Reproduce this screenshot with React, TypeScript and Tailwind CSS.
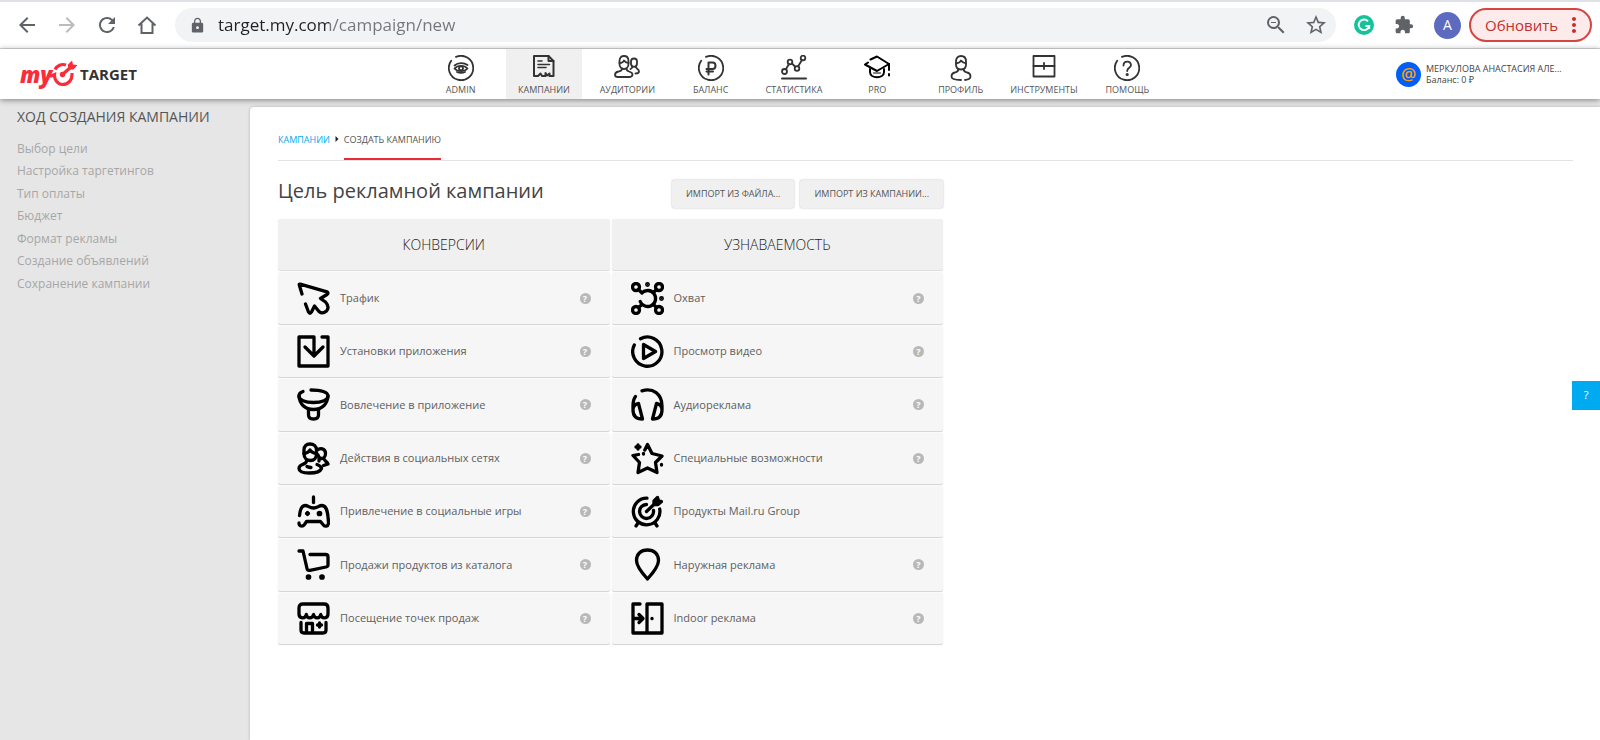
import { ReactNode } from "react";
import {
  MdArrowBack,
  MdArrowForward,
  MdExtension,
  MdLock,
  MdMoreVert,
  MdRefresh,
  MdStarBorder,
  MdZoomOut,
} from "react-icons/md";

type NavItem = { label: string; icon: ReactNode; active?: boolean };
type Goal = { label: string; icon: ReactNode; noHelp?: boolean };

const ring = <path d="M8 1.9A12.2 12.2 0 1 1 3.2 5.8" />;

const navItems: NavItem[] = [
  {
    label: "ADMIN",
    icon: (
      <>
        {ring}
        <path d="M6.5 10.5C10 7.5 16 7.5 19.5 10" />
        <path d="M6.5 13.5C9.5 10 16.5 10 19.5 13.5C16.5 17 9.5 17 6.5 13.5Z" />
        <circle cx="13" cy="13.3" r="2" />
        <path d="M9 17C11.5 18.2 14.5 18.2 17 17" />
      </>
    ),
  },
  {
    label: "КАМПАНИИ",
    active: true,
    icon: (
      <g strokeWidth="2">
        <path d="M3 21V1H17.5L22.5 6V21H18.5V18.5L16 20.5L14.5 18V21H11L9.5 18.5L7 21H3" />
        <path d="M17.5 1V6H22.5" />
        <path d="M7 6H11M7 9.5H18.5M7 12.5H15" strokeWidth="1.6" />
      </g>
    ),
  },
  {
    label: "АУДИТОРИИ",
    icon: (
      <>
        <path d="M5.5 6C5.5 2.5 7.5 1 10 1S14.5 2.5 14.5 6V9C14.5 12 12.5 14 10 14S5.5 12 5.5 9Z" />
        <path d="M5.5 8C8 8 9.5 7 10 5.5C11 7 12.5 8 14.5 8" />
        <path d="M8 13.5C8 16 6.5 16 4.5 16.5C2 17 1 18.5 1 20C1 21.5 2 22 4 22H15C18 22 18.5 21 18.5 19.5C18.5 17.5 17 17 15 16.5C13 16 12.5 15.5 12.5 13.5" />
        <path d="M17 6.5C17 4.5 18.2 3.5 20 3.5S23 4.5 23 6.5V8.5C23 10.5 22 11.8 20 11.8S17 10.5 17 8.5Z" />
        <path d="M21.5 11.5C21.5 13.5 25 13.5 25 16.5C25 18 24 18.5 21.5 18.5M18.5 11.5C18.5 13 17.5 13.5 16.5 14" />
      </>
    ),
  },
  {
    label: "БАЛАНС",
    icon: (
      <>
        {ring}
        <path d="M10.5 19.5V7.5H14.5C18.5 7.5 18.5 14 14.5 14H8.5M8.5 16.5H15" strokeWidth="2" />
      </>
    ),
  },
  {
    label: "СТАТИСТИКА",
    icon: (
      <>
        <circle cx="3.5" cy="16.5" r="2.5" />
        <circle cx="9" cy="7" r="2.3" />
        <circle cx="16" cy="13.5" r="2.3" />
        <circle cx="22" cy="3" r="2.3" />
        <path d="M5 14L8 9M11 8.5L14.5 12M17 11.5L21 5" />
        <path d="M1 23.5H25" strokeWidth="2" />
      </>
    ),
  },
  {
    label: "PRO",
    icon: (
      <g stroke="#000" strokeWidth="2">
        <path d="M6.5 4.5L13 1.5L25 9L13 16L1 9.5L4 7.5" />
        <path d="M6 14V17C6 24 20 24 20 17V14" />
        <path d="M9.5 18H16.5" strokeWidth="1" />
        <path d="M25 9V15M25 19V20.5" />
      </g>
    ),
  },
  {
    label: "ПРОФИЛЬ",
    icon: (
      <>
        <path d="M8 6.5C8 3 10 1 13 1S18 3 18 6.5V9.5C18 12.5 16 14.5 13 14.5S8 12.5 8 9.5Z" />
        <path d="M8 8.5C10.5 8 12.5 7 13 5.5C14 7 16 8 18 8.5" />
        <path d="M10.5 14C10.5 16.5 9 17 7 17.5C4.5 18 3.5 19.5 3.5 21.5C3.5 24 6 25 13 25M17 25C21 24.5 22.5 23.5 22.5 21.5C22.5 19.5 21.5 18 19 17.5C17 17 15.5 16.5 15.5 14" />
      </>
    ),
  },
  {
    label: "ИНСТРУМЕНТЫ",
    icon: (
      <>
        <rect x="2.5" y="1" width="21" height="20.5" />
        <path d="M2.5 11H23.5M13 8V14" />
      </>
    ),
  },
  {
    label: "ПОМОЩЬ",
    icon: (
      <>
        {ring}
        <path d="M9.5 10.5C9.5 5.5 17 5.5 17 10C17 13 13.2 12.5 13.2 16" />
        <circle cx="13.2" cy="19.5" r="0.7" fill="#333" />
      </>
    ),
  },
];

const steps = [
  "Выбор цели",
  "Настройка таргетингов",
  "Тип оплаты",
  "Бюджет",
  "Формат рекламы",
  "Создание объявлений",
  "Сохранение кампании",
];

const conversions: Goal[] = [
  {
    label: "Трафик",
    icon: (
      <path d="M5 12L2.3 3Q2 1.8 3.2 2.1L30 9.8Q32 10.8 30 12.5L23.5 16.5L28.5 20Q33 25 29.5 29Q25.5 32.5 22 29.5L17.5 24L14.5 30Q13 32.5 11.5 30L8.5 22" />
    ),
  },
  {
    label: "Установки приложения",
    icon: <path d="M17 20.5V2H2V31H31V2H25M8 12L17 21L26 12" />,
  },
  {
    label: "Вовлечение в приложение",
    icon: (
      <>
        <path d="M6 3.5C3 4.5 2 6 2 8C2 12 8 14.5 16.5 14.5S31 12 31 8C31 4 24 2 14 2" />
        <path d="M2 8C2.5 16 8 21.5 16.5 21.5S30.5 16 31 8" />
        <path d="M11.5 22V27Q11.5 31 16.5 31T21.5 27V22" />
      </>
    ),
  },
  {
    label: "Действия в социальных сетях",
    icon: (
      <>
        <path d="M7 8C7 4 9.5 2 13 2S19.5 4 19.5 8V12C19.5 16 17 18.5 13.5 18.5S7 16 7 12Z" />
        <path d="M7 11.5C10 11 12 10 13 8C14 10 16.5 11 19.5 11.5" />
        <path d="M9.5 19C9.5 21 8 21.5 5.5 22.5C3 23.5 2 25 2 26.5C2 29.5 6.5 31 12.5 31S23 30 24.5 26.5C24.5 24.5 22.5 23.5 20 22.5" />
        <path d="M10 24.5C12 25.5 13 25.5 14 25.5" />
        <path d="M21 7.5C25 5.5 28.5 7.5 28.5 11.5C28.5 14.5 26.5 16.5 24.5 16.5S21.5 15 21 13M27 17C28 19 30 20 31 22L26.5 23.5M22 16V19" />
      </>
    ),
  },
  {
    label: "Привлечение в социальные игры",
    icon: (
      <>
        <path d="M16.5 2V7.5" />
        <path d="M2.5 20.5C3 16 4 10.5 8 10.5C11.5 10.5 12 13 16.5 13S21.5 10.5 25 10.5C30 10.5 31 18 31.5 27.5C31.5 32 27.5 32 26 29.5L23.5 26.5H9.5L7.5 29.5C5.5 32 2 31.5 2 28" />
        <path d="M10.5 17.5V19.5M9.5 18.5H11.5" />
        <circle cx="22.5" cy="18.5" r="1.2" fill="#000" />
      </>
    ),
  },
  {
    label: "Продажи продуктов из каталога",
    icon: (
      <>
        <path d="M2 3H6L10 20.5Q10.5 22.8 13 22.3L29 19Q31 18.5 31 17V9Q31 6.5 28.5 6.5H13" />
        <circle cx="11.5" cy="29" r="1.2" fill="#000" />
        <circle cx="25" cy="29" r="1.2" fill="#000" />
      </>
    ),
  },
  {
    label: "Посещение точек продаж",
    icon: (
      <>
        <path d="M2 12V6Q2 2 6 2H27Q31 2 31 6V12C31 17 24.5 17 23.7 12.5C23 17 17.5 17 16.5 12.5C15.5 17 10 17 9.3 12.5C8.5 17 2 17 2 12Z" />
        <path d="M4 20.5V28Q4 31 7 31H26Q29 31 29 28V20.5M9.5 30V21.5H15.5V30M22.5 21V25M20.5 23H24.5" />
      </>
    ),
  },
];

const awareness: Goal[] = [
  {
    label: "Охват",
    icon: (
      <>
        <circle cx="5" cy="5" r="3.5" />
        <circle cx="28" cy="5" r="3.5" />
        <circle cx="5" cy="28" r="3.5" />
        <circle cx="28" cy="28" r="3.5" />
        <path d="M11 10.8A8 8 0 1 1 9.2 19.5M7.5 7.5L11 11M25.5 7.5L22.5 10.5M25.5 25.5L22.5 22.5M7.5 25.5L11 22.5" />
        <circle cx="16.5" cy="2.5" r="0.8" fill="#000" />
        <circle cx="30.5" cy="16.5" r="0.8" fill="#000" />
      </>
    ),
  },
  {
    label: "Просмотр видео",
    icon: <path d="M9.5 3.7A14.6 14.6 0 1 1 3.3 10M12.5 9.5V23.5L24.5 16.5Z" />,
  },
  {
    label: "Аудиореклама",
    icon: (
      <>
        <path d="M11 2.8C22 -0.5 31 6 31 18V22C31 28 28 31 21.5 31L25.5 15.5C29 16 31 18 31 22" />
        <path d="M4.5 8.5C2.5 11 2 14 2 18V22C2 28 5 31 11.5 31L7.5 15.5C4 16 2 18 2 22" />
      </>
    ),
  },
  {
    label: "Специальные возможности",
    icon: (
      <>
        <path d="M13.8 8L16.5 2.5L21 11.5L31 14L24.5 20.5L26 30.5L16.5 26L7 30.5L8.5 20.5L2 13.5L7.5 12.5" />
        <path d="M7 3V7M5 5H9M12.5 11.5V12M30.5 22.5V23" />
      </>
    ),
  },
  {
    label: "Продукты Mail.ru Group",
    noHelp: true,
    icon: (
      <>
        <path d="M16 3.2A13.3 13.3 0 1 0 28.7 14" />
        <path d="M15.5 9.5A7 7 0 1 0 22.5 15.5M15.5 16.5L25 7.5M7 28L5 31M24 28L26 31" />
        <path d="M23 9.5V6L26.5 2.5L27.5 5.5L30.5 6.5L27 9.5Z" fill="#000" />
      </>
    ),
  },
  {
    label: "Наружная реклама",
    icon: (
      <path d="M16.5 31C12 26 5.5 19 5.5 12.5C5.5 6 10 2 16.5 2S27.5 6 27.5 12.5C27.5 19 21 26 16.5 31Z" />
    ),
  },
  {
    label: "Indoor реклама",
    icon: <path d="M9 2H2V31H31V2H16V31M2 16.5H11M8 12.5L12 16.5L8 20.5M21 16.3V16.7" />,
  },
];

function BrowserBar() {
  return (
    <div className="flex h-[49px] items-center border-t-2 border-b border-t-[#dee1e6] border-b-[#d9dbdf] bg-white pr-2 pl-[15px] text-[#5f6368]">
      <div className="flex w-40 items-center gap-4">
        <button aria-label="Назад"><MdArrowBack size={24} /></button>
        <button aria-label="Вперёд" className="text-[#babcbe]"><MdArrowForward size={24} /></button>
        <button aria-label="Обновить страницу"><MdRefresh size={24} /></button>
        <button aria-label="Домой">
          <svg viewBox="0 0 24 24" className="h-6 w-6" fill="none" stroke="currentColor" strokeWidth="2">
            <path d="M3.5 12.5L12 4.5L20.5 12.5M6.5 10.5V20H17.5V10.5" />
          </svg>
        </button>
      </div>
      <div className="flex h-[34px] flex-1 items-center rounded-full bg-[#f1f3f4] pr-2 pl-[14px]">
        <MdLock size={17} />
        <input
          type="text"
          aria-label="Адрес"
          defaultValue="target.my.com/campaign/new"
          className="ml-3 min-w-0 flex-1 bg-[linear-gradient(to_right,#202124_111px,#73777b_111px)] bg-clip-text text-[17px] leading-6 text-transparent outline-none"
        />
        <div className="flex gap-4">
          <button aria-label="Масштаб"><MdZoomOut size={24} /></button>
          <button aria-label="В избранное"><MdStarBorder size={24} /></button>
        </div>
      </div>
      <div className="flex items-center gap-5 pr-2 pl-[18px]">
        <button aria-label="Grammarly">
          <svg viewBox="0 0 20 20" className="h-5 w-5" fill="none">
            <circle cx="10" cy="10" r="10" fill="#15c39a" />
            <path d="M14 6.3A5.3 5.3 0 1 0 15.2 11H11.5M15.2 10.2V14" stroke="#fff" strokeWidth="1.9" />
          </svg>
        </button>
        <button aria-label="Расширения"><MdExtension size={20} /></button>
        <button className="h-[27px] w-[27px] rounded-full bg-[#5c6bc0] text-sm text-white">A</button>
      </div>
      <button className="flex h-[34px] w-[123px] items-center justify-between rounded-full border-2 border-[#d64541] bg-[#fcebea] pr-1 pl-[14px] text-[15px] text-[#c5302b]">
        Обновить
        <MdMoreVert size={24} />
      </button>
    </div>
  );
}

function Logo() {
  return (
    <a href="#" aria-label="myTarget" className="flex w-[419px] items-center pl-5">
      <span className="w-[30px] text-[22px] leading-6 font-extrabold text-[#fb2b3a] italic">my</span>
      <svg viewBox="0 0 28 28" className="mr-0.5 h-7 w-7" fill="none" stroke="#fb2b3a" strokeWidth="3.2">
        <path d="M16 5C11.5 3.5 7 5.5 5 9.5" />
        <path d="M0 16.5L4.5 14.5C4 19.5 7.5 24 12.5 24.5C18.5 24.5 22.5 20 22 13" />
        <path d="M12.5 14.5L21 7" />
        <circle cx="12.5" cy="14.5" r="2" fill="#fb2b3a" strokeWidth="1.5" />
        <path d="M18 9V4.5L22 0.5L23 4.5L27.5 5L23.5 9.5H19Z" fill="#fb2b3a" stroke="none" />
      </svg>
      <span className="text-[15px] leading-5 font-bold text-[#333]">TARGET</span>
    </a>
  );
}

function Header() {
  return (
    <header className="relative z-10 flex h-[50px] bg-white shadow-[0_1px_6px_rgba(0,0,0,0.45)]">
      <Logo />
      <nav className="grid w-[750px] grid-cols-9">
        {navItems.map((item) => (
          <a
            key={item.label}
            href="#"
            className={`mx-1 flex flex-col items-center pt-[6px] text-[9px] leading-[17px] whitespace-nowrap text-[#555] ${item.active ? "bg-[#f0f0f0]" : ""}`}
          >
            <svg viewBox="0 0 26 26" className="h-[26px] w-[26px] shrink-0" fill="none" stroke="#333" strokeWidth="1.8" strokeLinecap="round" strokeLinejoin="round">
              {item.icon}
            </svg>
            {item.label}
          </a>
        ))}
      </nav>
      <a href="#" className="ml-auto flex w-[204px] items-center gap-[5px] text-[9px] leading-[11px] text-[#444]">
        <span className="flex h-[25px] w-[25px] items-center justify-center rounded-full bg-[#005ff9] text-[17px] leading-5 font-semibold text-[#ff9e00]">
          @
        </span>
        <span>
          МЕРКУЛОВА АНАСТАСИЯ АЛЕ...
          <br />
          Баланс: 0 ₽
        </span>
      </a>
    </header>
  );
}

function GoalColumn({ title, goals }: { title: string; goals: Goal[] }) {
  return (
    <div className="grid h-[425px] flex-1 grid-rows-8 gap-0.5">
      <h2 className="flex items-center justify-center rounded-xs bg-[#f0f0f0] text-sm font-light text-[#222] shadow-[0_1px_1px_rgba(0,0,0,0.15)]">
        {title}
      </h2>
      {goals.map((goal) => (
        <button
          key={goal.label}
          className="flex items-center rounded-xs bg-[#f6f6f6] px-[19px] text-left text-[11px] text-[#606060] shadow-[0_1px_1px_rgba(0,0,0,0.18)]"
        >
          <svg viewBox="0 0 33 33" className="mr-[10px] h-[33px] w-[33px]" fill="none" stroke="#000" strokeWidth="3.3" strokeLinecap="round" strokeLinejoin="round">
            {goal.icon}
          </svg>
          <span className="flex-1">{goal.label}</span>
          {!goal.noHelp && (
            <span className="flex h-[11px] w-[11px] items-center justify-center rounded-full bg-[#b8b8b8] text-[9px] leading-[11px] font-bold text-white">
              ?
            </span>
          )}
        </button>
      ))}
    </div>
  );
}

export default function App() {
  return (
    <div className="flex min-h-screen flex-col bg-[#e6e6e6] font-['Open_Sans','Noto_Sans',sans-serif]">
      <BrowserBar />
      <Header />
      <div className="flex flex-1">
        <aside className="w-[250px] shrink-0 pt-2 pl-[17px]">
          <h2 className="text-sm leading-5 text-[#555]">ХОД СОЗДАНИЯ КАМПАНИИ</h2>
          <ul className="mt-[11px] grid h-[157px] grid-rows-7 text-xs leading-[22px] text-[#a6a6a6]">
            {steps.map((step) => (
              <li key={step}>{step}</li>
            ))}
          </ul>
        </aside>
        <main className="mt-2 flex-1 rounded-tl-sm bg-white pr-[27px] pl-7 shadow-[0_0_3px_rgba(0,0,0,0.25)]">
          <div className="flex h-[54px] border-b border-[#e3e3e3] pt-[23px] text-[9px] leading-5">
            <a href="#" className="text-[#00aaf0]">КАМПАНИИ</a>
            <svg viewBox="0 0 4 6" className="mx-[5px] mt-[6px] h-[6px] w-1">
              <path d="M0.5 0L3.5 3L0.5 6Z" fill="#222" />
            </svg>
            <span className="border-b-2 border-[#ed2939] text-[#555]">СОЗДАТЬ КАМПАНИЮ</span>
          </div>
          <div className="max-w-[665px]">
            <div className="flex items-center gap-[6px] pt-[19px] pb-[11px]">
              <h1 className="mr-auto -mt-1.5 text-xl leading-7 text-[#444]">Цель рекламной кампании</h1>
              <button className="h-7 rounded-xs bg-[#f0f0f0] px-[14px] text-[9px] text-[#555] shadow-[0_0_2px_rgba(0,0,0,0.3)]">
                ИМПОРТ ИЗ ФАЙЛА...
              </button>
              <button className="h-7 rounded-xs bg-[#f0f0f0] px-[14px] text-[9px] text-[#555] shadow-[0_0_2px_rgba(0,0,0,0.3)]">
                ИМПОРТ ИЗ КАМПАНИИ...
              </button>
            </div>
            <div className="flex gap-0.5">
              <GoalColumn title="КОНВЕРСИИ" goals={conversions} />
              <GoalColumn title="УЗНАВАЕМОСТЬ" goals={awareness} />
            </div>
          </div>
        </main>
      </div>
      <button className="fixed top-[381px] right-0 h-[29px] w-7 bg-[#00aaf0] text-[11px] text-white">?</button>
    </div>
  );
}
